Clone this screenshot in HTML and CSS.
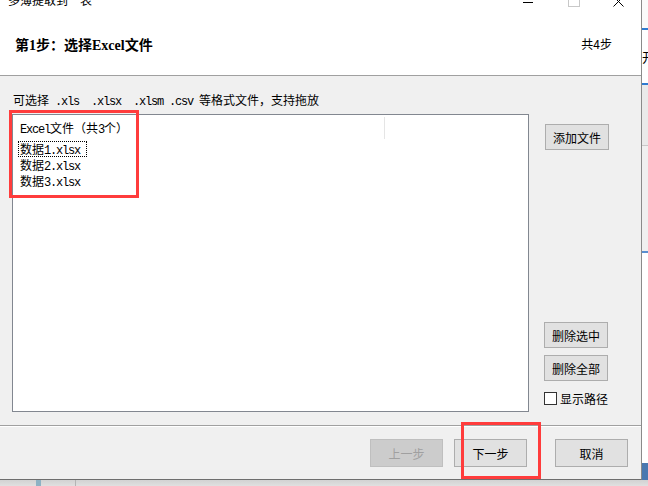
FILE: index.html
```html
<!DOCTYPE html>
<html lang="zh-CN">
<head>
<meta charset="utf-8">
<title>多薄提取到一表</title>
<link rel="stylesheet" href="styles.css">
</head>
<body>
<div class="screen">
  <div class="window">
    <div class="top">
      <div class="titlebar">
        <span class="title-text">多薄提取到一表</span>
        <span class="spacer"></span>
        <span class="ctl-min"></span>
        <span class="ctl-max"></span>
        <svg class="ctl-close" width="11" height="11" viewBox="0 0 11 11"><path d="M0.5 0.5L10.5 10.5M10.5 0.5L0.5 10.5" stroke="#000" stroke-width="1" fill="none"/></svg>
      </div>
      <div class="header">
        <span class="step-title">第<span class="serif">1</span>步：选择<span class="serif">Excel</span>文件</span>
        <span class="step-count">共4步</span>
      </div>
    </div>
    <div class="content">
      <div class="hint">可选择<span class="lat"> .xls  .xlsx  .xlsm .csv </span>等格式文件，支持拖放</div>
      <div class="main">
        <div class="listbox">
          <div class="list-head">
            <div class="col-main"><span class="lat">Excel</span>文件（共<span class="lat">3</span>个）</div>
          </div>
          <div class="item focused">数据<span class="lat">1.xlsx</span></div>
          <div class="item">数据<span class="lat">2.xlsx</span></div>
          <div class="item">数据<span class="lat">3.xlsx</span></div>
        </div>
        <div class="side-col">
          <button class="btn">添加文件</button>
          <div class="side-bottom">
            <button class="btn">删除选中</button>
            <button class="btn">删除全部</button>
            <label class="check-row"><span class="checkbox"></span>显示路径</label>
          </div>
        </div>
      </div>
      <div class="separator"></div>
      <div class="footer">
        <button class="fbtn disabled">上一步</button>
        <button class="fbtn next">下一步</button>
        <button class="fbtn cancel">取消</button>
      </div>
    </div>
  </div>
  <div class="behind">
    <div class="b1"></div>
    <div class="b-blue"></div>
    <div class="b2">开</div>
    <div class="b-blue"></div>
    <div class="b3"></div>
    <div class="b4"></div>
    <div class="b-blue2"></div>
    <div class="b5"></div>
    <div class="b6"></div>
  </div>
</div>
<div class="taskbar">
  <span class="tb-pin"></span>
  <span class="tb-line"></span>
</div>
<div class="mark mark-list"></div>
<div class="mark mark-next"></div>
</body>
</html>
```

FILE: styles.css
```css
html, body {
  margin: 0;
  padding: 0;
}
body {
  width: 648px;
  height: 486px;
  overflow: hidden;
  position: relative;
  background: #dcdcdc;
  font-family: "Noto Sans CJK SC", sans-serif;
  font-size: 12px;
  color: #000;
}
.screen {
  display: flex;
  height: 480px;
}
.window {
  width: 641px;
  height: 479px;
  background: #f0f0f0;
  border-right: 1px solid #8a8a8a;
  border-bottom: 1px solid #6e6e6e;
  display: flex;
  flex-direction: column;
  flex-shrink: 0;
}
.top {
  background: #fff;
  height: 75px;
  border-bottom: 1px solid #a0a0a0;
  display: flex;
  flex-direction: column;
}
.titlebar {
  height: 7px;
  overflow: hidden;
  display: flex;
  align-items: flex-start;
  padding: 0 17px 0 8px;
}
.title-text {
  margin-top: -8px;
  line-height: 16px;
  font-size: 12px;
  color: #000;
}
.spacer { flex: 1; }
.ctl-min {
  width: 10px;
  height: 1px;
  background: #000;
  margin-top: 2px;
}
.ctl-max {
  width: 10px;
  height: 10px;
  border: 1px solid #c8c8c8;
  margin-top: -5px;
  margin-left: 35px;
}
.ctl-close {
  margin-top: -4px;
  margin-left: 33px;
  flex-shrink: 0;
}
.header {
  flex: 1;
  display: flex;
  align-items: center;
  justify-content: space-between;
  padding: 5px 29px 0 15px;
}
.step-title {
  font-size: 14px;
  font-weight: bold;
}
.serif {
  font-family: "Liberation Serif", serif;
  font-weight: bold;
}
.step-count {
  font-size: 12px;
}
.lat {
  font-family: "Liberation Mono", monospace;
  letter-spacing: -1.2px;
  white-space: pre;
}
.content {
  display: flex;
  flex-direction: column;
  flex: 1;
}
.hint {
  margin: 16px 0 0 13px;
  line-height: 16px;
  height: 16px;
  white-space: pre;
}
.main {
  display: flex;
  margin: 6px 0 0 12px;
}
.listbox {
  width: 517px;
  height: 298px;
  box-sizing: border-box;
  border: 1px solid #828790;
  background: #fff;
}
.list-head {
  display: flex;
  margin-top: 2px;
  height: 22px;
}
.col-main {
  width: 364px;
  padding-left: 7px;
  border-right: 1px solid #e5e5e5;
  line-height: 22px;
}
.item {
  width: fit-content;
  margin-left: 5px;
  padding: 0 6px 0 1px;
  line-height: 14px;
  height: 14px;
  border: 1px solid transparent;
  font-size: 12px;
}
.list-head + .item { margin-top: 2px; }
.item.focused {
  border: 1px dotted #000;
}
.side-col {
  display: flex;
  flex-direction: column;
  align-items: flex-start;
  margin-left: 15px;
  padding: 10px 0 7px;
  height: 298px;
  box-sizing: border-box;
}
.side-col > .btn { margin-left: 1px; }
.side-bottom {
  margin-top: auto;
  display: flex;
  flex-direction: column;
  gap: 7px;
}
.btn {
  width: 64px;
  height: 26px;
  padding: 0;
  background: #e1e1e1;
  border: 1px solid #adadad;
  font-family: "Noto Sans CJK SC", sans-serif;
  font-size: 12px;
  color: #000;
}
.check-row {
  display: flex;
  align-items: center;
  gap: 3px;
  margin-top: 4px;
  height: 13px;
  line-height: 13px;
}
.checkbox {
  width: 11px;
  height: 11px;
  border: 1px solid #333;
  background: #fff;
}
.separator {
  margin-top: 13px;
  border-top: 1px solid #a0a0a0;
  border-bottom: 1px solid #fff;
}
.footer {
  display: flex;
  justify-content: flex-end;
  padding: 12px 13px 0 0;
  gap: 11px;
}
.fbtn {
  width: 73px;
  height: 28px;
  padding: 0;
  background: #e1e1e1;
  border: 1px solid #adadad;
  font-family: "Noto Sans CJK SC", sans-serif;
  font-size: 12px;
  color: #000;
}
.fbtn.disabled {
  background: #cccccc;
  border-color: #bfbfbf;
  color: #a0a0a0;
}
.fbtn.cancel { margin-left: 17px; }
.behind {
  flex: 1;
  background: #f7f7f7;
  display: flex;
  flex-direction: column;
  overflow: hidden;
}
.b1 { height: 28px; background: #fafafa; }
.b-blue { height: 2px; background: #2f7bd0; }
.b2 { height: 53px; line-height: 53px; font-size: 13px; background: #fff; }
.b3 { height: 60px; background: #eaeaea; border-bottom: 1px solid #c8c8c8; }
.b4 { height: 105px; background: #f0f0f0; }
.b-blue2 { height: 2px; background: #5a8fd0; }
.b5 { height: 210px; background: #fff; }
.b6 { flex: 1; background: #4a78b0; }
.taskbar {
  height: 6px;
  background: linear-gradient(#d2d2d2, #e0e0e0);
  position: relative;
  display: flex;
}
.tb-pin {
  margin-left: 36px;
  width: 5px;
  background: #8eb2c4;
}
.tb-line {
  margin-left: 34px;
  width: 1px;
  background: #b4b4b4;
}
.mark {
  position: absolute;
  box-sizing: border-box;
  border: 3px solid #ff3c3c;
}
.mark-list {
  left: 9px;
  top: 110px;
  width: 130px;
  height: 88px;
}
.mark-next {
  left: 461px;
  top: 422px;
  width: 80px;
  height: 57px;
}
```
